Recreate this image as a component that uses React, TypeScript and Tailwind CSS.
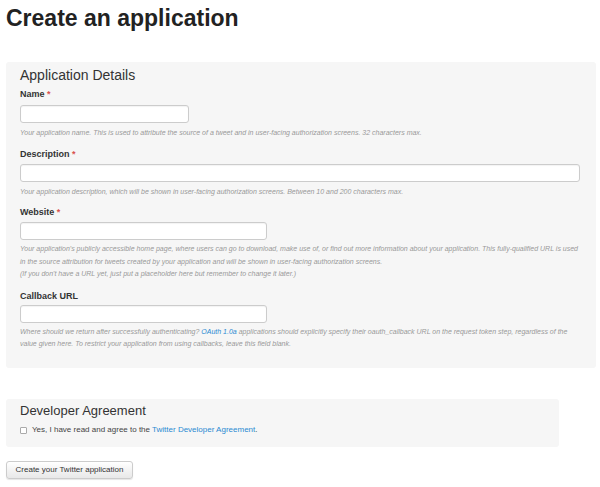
export default function App() {
  const help = "text-[7px] italic text-[#999] leading-[12.5px]";
  const label = "text-[9px] font-bold text-[#333] leading-[12px]";
  const input = "block h-[18px] bg-white border border-[#ccc] rounded-[3px] shadow-[inset_0_1px_1px_rgba(0,0,0,0.05)]";
  const star = <span className="text-[#d9534f]"> *</span>;
  return (
    <div className="w-[600px] h-[487px] bg-white text-[#333] pl-[6px]" style={{ fontFamily: '"Liberation Sans", Arial, sans-serif' }}>
      <h1 className="text-[23px] font-bold leading-[28px] pt-[4px] text-[#222]">Create an application</h1>
      <div className="mt-[30px] w-[590px] h-[306px] bg-[#f6f6f6] rounded-[3px] pl-[14px] pr-[16px] pt-[5px]">
        <h2 className="text-[14px] leading-[16px]">Application Details</h2>
        <div className={label + " mt-[5px]"}>Name{star}</div>
        <div className={input + " w-[169px] mt-[5px]"} />
        <p className={help + " mt-[4px]"}>Your application name. This is used to attribute the source of a tweet and in user-facing authorization screens. 32 characters max.</p>
        <div className={label + " mt-[8px]"}>Description{star}</div>
        <div className={input + " w-[560px] mt-[4px]"} />
        <p className={help + " mt-[4px]"}>Your application description, which will be shown in user-facing authorization screens. Between 10 and 200 characters max.</p>
        <div className={label + " mt-[8px]"}>Website{star}</div>
        <div className={input + " w-[247px] mt-[4px]"} />
        <p className={help + " mt-[3px]"}>
          Your application's publicly accessible home page, where users can go to download, make use of, or find out more information about your application. This fully-qualified URL is used in the source attribution for tweets created by your application and will be shown in user-facing authorization screens.
          <br />(If you don't have a URL yet, just put a placeholder here but remember to change it later.)
        </p>
        <div className={label + " mt-[9px]"}>Callback URL</div>
        <div className={input + " w-[247px] mt-[3px]"} />
        <p className={help + " mt-[3px]"}>
          Where should we return after successfully authenticating? <span className="text-[#2a8ad2]">OAuth 1.0a</span> applications should explicitly specify their oauth_callback URL on the request token step, regardless of the value given here. To restrict your application from using callbacks, leave this field blank.
        </p>
      </div>
      <div className="mt-[31px] w-[553px] h-[48px] bg-[#f6f6f6] rounded-[3px] pl-[14px] pt-[4px]">
        <h2 className="text-[13px] leading-[16px]">Developer Agreement</h2>
        <label className="flex items-center gap-[5px] mt-[5px] text-[8px] text-[#444]">
          <span className="w-[7px] h-[7px] border border-[#aaa] rounded-[1px] bg-white" />
          <span>Yes, I have read and agree to the <span className="text-[#2a8ad2]">Twitter Developer Agreement</span>.</span>
        </label>
      </div>
      <button className="mt-[14px] h-[18px] w-[127px] text-[8px] text-[#333] border border-[#ccc] rounded-[3px] bg-gradient-to-b from-white to-[#e8e8e8] shadow-[0_1px_1px_rgba(0,0,0,0.1)]">Create your Twitter application</button>
    </div>
  );
}
